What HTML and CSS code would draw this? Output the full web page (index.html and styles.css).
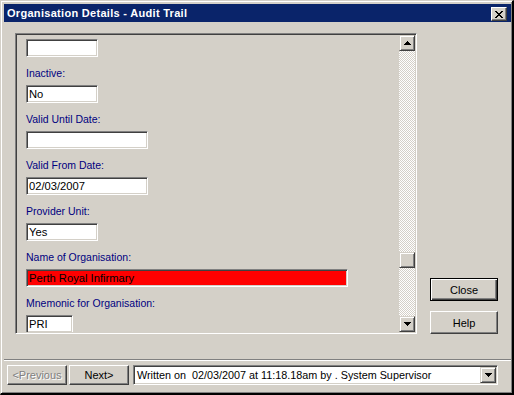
FILE: index.html
```html
<!DOCTYPE html>
<html>
<head>
<meta charset="utf-8">
<link rel="stylesheet" href="styles.css">
</head>
<body>
<div class="window">
  <div class="titlebar">
    <span class="title">Organisation Details - Audit Trail</span>
    <div class="tb-close">
      <svg width="8" height="7" viewBox="0 0 8 7" shape-rendering="crispEdges"><path d="M0 0h2v1H0zM6 0h2v1H6zM1 1h2v1H1zM5 1h2v1H5zM2 2h4v1H2zM3 3h2v1H3zM2 4h4v1H2zM1 5h2v1H1zM5 5h2v1H5zM0 6h2v1H0zM6 6h2v1H6z" fill="#000"/></svg>
    </div>
  </div>
  <div class="main">
    <div class="panel">
      <div class="content">
        <div class="input w72"></div>
        <div class="field"><div class="label">Inactive:</div><div class="input w72">No</div></div>
        <div class="field"><div class="label">Valid Until Date:</div><div class="input w122"></div></div>
        <div class="field"><div class="label">Valid From Date:</div><div class="input w122">02/03/2007</div></div>
        <div class="field"><div class="label">Provider Unit:</div><div class="input w72">Yes</div></div>
        <div class="field"><div class="label">Name of Organisation:</div><div class="input w322 red">Perth Royal Infirmary</div></div>
        <div class="field"><div class="label">Mnemonic for Organisation:</div><div class="input w47">PRI</div></div>
      </div>
      <div class="scrollbar">
        <div class="sb-btn">
          <svg width="7" height="4" viewBox="0 0 7 4" shape-rendering="crispEdges"><path d="M3 0h1v1H3zM2 1h3v1H2zM1 2h5v1H1zM0 3h7v1H0z" fill="#000"/></svg>
        </div>
        <div class="track">
          <div class="thumb" style="margin-top:201px"></div>
        </div>
        <div class="sb-btn">
          <svg width="7" height="4" viewBox="0 0 7 4" shape-rendering="crispEdges"><path d="M0 0h7v1H0zM1 1h5v1H1zM2 2h3v1H2zM3 3h1v1H3z" fill="#000"/></svg>
        </div>
      </div>
    </div>
    <div class="side">
      <div class="btn default side-btn">Close</div>
      <div class="btn side-btn">Help</div>
    </div>
  </div>
  <div class="sep"></div>
  <div class="bottom">
    <div class="btn nav disabled">&lt;Previous</div>
    <div class="btn nav next">Next&gt;</div>
    <div class="combo">
      <span class="combo-text">Written on  02/03/2007 at 11:18.18am by . System Supervisor</span>
      <div class="sb-btn combo-btn">
        <svg width="7" height="4" viewBox="0 0 7 4" shape-rendering="crispEdges"><path d="M0 0h7v1H0zM1 1h5v1H1zM2 2h3v1H2zM3 3h1v1H3z" fill="#000"/></svg>
      </div>
    </div>
  </div>
</div>
</body>
</html>
```
FILE: styles.css
```css
html, body {
  margin: 0;
  padding: 0;
  background: #000;
}

.window {
  width: 514px;
  height: 395px;
  box-sizing: border-box;
  background: #d4d0c8;
  border-style: solid;
  border-width: 1px 2px 2px 1px;
  border-color: #d4d0c8 #000 #000 #d4d0c8;
  box-shadow: inset 1px 1px #fff, inset -1px -1px #808080;
  padding: 3px 1px 0 3px;
  display: flex;
  flex-direction: column;
  font-family: "Liberation Sans", Arial, sans-serif;
  font-size: 10.5px;
  color: #000;
}

.titlebar {
  height: 18px;
  flex: none;
  background: #0a246a;
  display: flex;
  align-items: flex-start;
  justify-content: space-between;
  padding: 0 4px 0 3px;
}

.title {
  color: #fff;
  font-weight: bold;
  font-size: 11px;
  letter-spacing: 0.3px;
  line-height: 18px;
}

.tb-close {
  margin-top: 3px;
  width: 16px;
  height: 14px;
  box-sizing: border-box;
  background: #d4d0c8;
  border: 1px solid;
  border-color: #fff #404040 #404040 #fff;
  box-shadow: inset -1px -1px #808080;
  display: flex;
  align-items: center;
  justify-content: center;
}

.main {
  display: flex;
  margin-top: 11px;
  padding-left: 11px;
  flex: none;
}

.panel {
  width: 402px;
  height: 301px;
  box-sizing: border-box;
  border: 1px solid;
  border-color: #808080 #fff #fff #808080;
  box-shadow: inset 1px 1px #404040, inset -1px -1px #d4d0c8;
  padding: 1px;
  display: flex;
}

.content {
  flex: 1;
  overflow: hidden;
  padding: 4px 0 0 9px;
  display: flex;
  flex-direction: column;
  align-items: flex-start;
}

.field {
  margin-top: 10px;
  display: flex;
  flex-direction: column;
  align-items: flex-start;
  gap: 5px;
  flex: none;
}

.label {
  color: #000080;
  line-height: 13px;
  height: 13px;
  white-space: nowrap;
}

.input {
  height: 18px;
  flex: none;
  box-sizing: border-box;
  border: 1px solid;
  border-color: #808080 #fff #fff #808080;
  box-shadow: inset 1px 1px #404040, inset -1px -1px #d4d0c8;
  background: #fff;
  padding: 0 2px;
  font-size: 11.2px;
  line-height: 16px;
  white-space: nowrap;
  overflow: hidden;
}

.w47 { width: 47px; }
.w72 { width: 72px; }
.w122 { width: 122px; }
.w322 { width: 322px; }
.red { background: #ff0000; }

.scrollbar {
  width: 16px;
  display: flex;
  flex-direction: column;
}

.sb-btn {
  width: 16px;
  height: 16px;
  flex: none;
  box-sizing: border-box;
  background: #d4d0c8;
  border: 1px solid;
  border-color: #d4d0c8 #404040 #404040 #d4d0c8;
  box-shadow: inset 1px 1px #fff, inset -1px -1px #808080;
  display: flex;
  align-items: center;
  justify-content: center;
}

.track {
  flex: 1;
  background: repeating-conic-gradient(#fff 0 25%, #d4d0c8 0 50%) 0 0 / 2px 2px;
}

.thumb {
  width: 16px;
  height: 16px;
  box-sizing: border-box;
  background: #d4d0c8;
  border: 1px solid;
  border-color: #d4d0c8 #404040 #404040 #d4d0c8;
  box-shadow: inset 1px 1px #fff, inset -1px -1px #808080;
}

.side {
  margin-left: 13px;
  display: flex;
  flex-direction: column;
  justify-content: flex-end;
  gap: 10px;
}

.btn {
  box-sizing: border-box;
  background: #d4d0c8;
  border: 1px solid;
  border-color: #fff #404040 #404040 #fff;
  box-shadow: inset -1px -1px #808080;
  display: flex;
  align-items: center;
  justify-content: center;
  white-space: nowrap;
  font-size: 11px;
}

.btn.default {
  border-color: #000;
  box-shadow: inset 1px 1px #fff, inset -1px -1px #404040, inset -2px -2px #808080;
}

.side-btn {
  width: 68px;
  height: 23px;
}

.sep {
  margin-top: 25px;
  border-top: 1px solid #808080;
  border-bottom: 1px solid #fff;
  flex: none;
}

.bottom {
  display: flex;
  margin-top: 4px;
  padding-left: 3px;
  flex: none;
}

.nav {
  width: 60px;
  height: 20px;
}

.next {
  margin-left: 2px;
}

.disabled {
  color: #808080;
  text-shadow: 1px 1px #fff;
}

.combo {
  margin-left: 4px;
  width: 365px;
  height: 20px;
  box-sizing: border-box;
  border: 1px solid;
  border-color: #808080 #fff #fff #808080;
  box-shadow: inset 1px 1px #404040, inset -1px -1px #d4d0c8;
  background: #fff;
  padding: 1px 1px 1px 3px;
  display: flex;
  align-items: center;
  justify-content: space-between;
}

.combo-text {
  white-space: pre;
  line-height: 16px;
  font-size: 10.8px;
}

.combo-btn {
  width: 16px;
  height: 16px;
}
```
